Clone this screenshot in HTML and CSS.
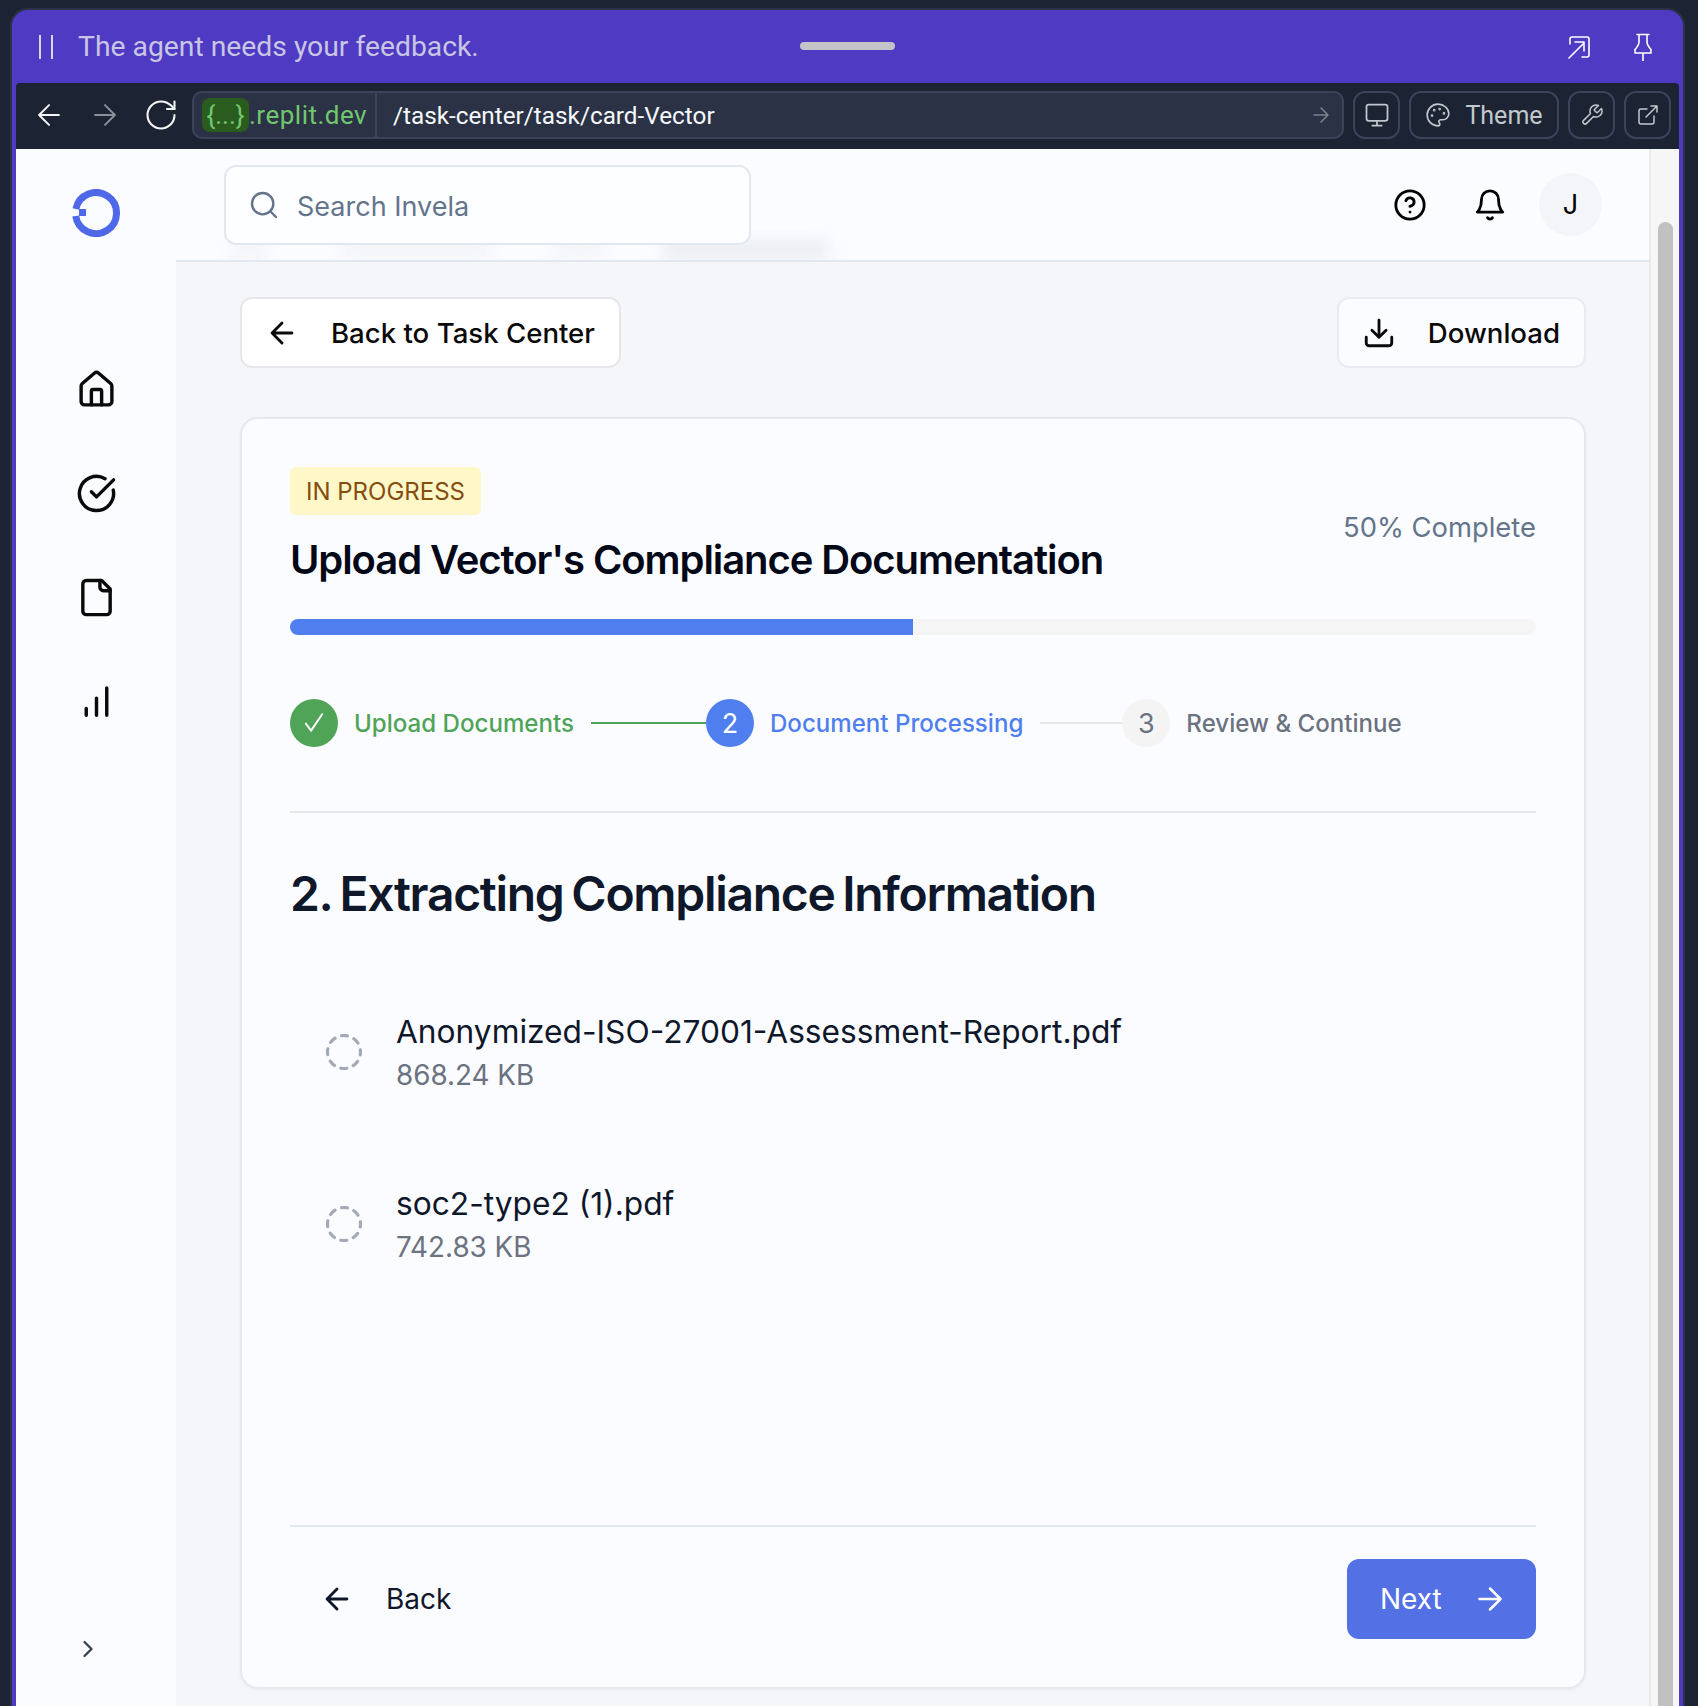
FILE: index.html
```html
<!DOCTYPE html>
<html lang="en">

<head>
    <meta charset="UTF-8">
    <meta name="viewport" content="width=device-width, initial-scale=1.0">
    <title>Invela - Task Center</title>
    <link rel="stylesheet" href="styles.css">
</head>

<body>
    <div class="window">
        <div class="agentbar">
            <svg class="pause" width="14" height="24" viewBox="0 0 14 24"><path d="M1 0v24M13 0v24" /></svg>
            <span class="agentbar-text">The agent needs your feedback.</span>
            <span class="handle"></span>
            <div class="agentbar-icons">
                <svg width="24" height="24" viewBox="0 0 24 24"><path d="M3 9V4a2 2 0 0 1 2-2h15a2 2 0 0 1 2 2v16a2 2 0 0 1-2 2h-5M2 23 17 8M8 7h9v9" /></svg>
                <svg width="18" height="28" viewBox="0 0 18 28"><path d="M3 1.5h12M5 1.5V9q0 3-4 7.5V20h16v-3.500Q13 12 13 9V1.500M9 20v8" /></svg>
            </div>
        </div>

        <div class="browser">
            <div class="toolbar">
                <svg class="nav-icon" width="34" height="34" viewBox="0 0 24 24"><path d="M19 12H5M12 19l-7-7 7-7" /></svg>
                <svg class="nav-icon dim" width="34" height="34" viewBox="0 0 24 24"><path d="M5 12h14M12 5l7 7-7 7" /></svg>
                <svg class="nav-icon reload" width="36" height="36" viewBox="0 0 24 24"><path d="M21 12a9 9 0 1 1-9-9c2.520 0 4.930 1 6.740 2.740L21 8" /><path d="M21 3v5h-5" /></svg>
                <div class="urlbar">
                    <div class="url-host"><span class="url-pill">{...}</span>.replit.dev</div>
                    <div class="url-path">/task-center/task/card-Vector</div>
                    <svg class="url-go" width="24" height="24" viewBox="0 0 24 24"><path d="M5 12h14M12 5l7 7-7 7" /></svg>
                </div>
                <button class="tool-btn square">
                    <svg width="28" height="28" viewBox="0 0 24 24"><rect x="3" y="3" width="18" height="14" rx="2" /><path d="M12 17v4M8 21h8" /></svg>
                </button>
                <button class="tool-btn theme">
                    <svg width="26" height="26" viewBox="0 0 24 24"><path d="M12 2C6.500 2 2 6.500 2 12s4.500 10 10 10c.926 0 1.648-.746 1.648-1.688 0-.437-.18-.835-.437-1.125-.29-.289-.438-.652-.438-1.125a1.640 1.640 0 0 1 1.668-1.668h1.996c3.051 0 5.555-2.503 5.555-5.554C21.965 6.012 17.461 2 12 2z" /><circle cx="13.500" cy="6.500" r=".5" /><circle cx="17.500" cy="10.500" r=".5" /><circle cx="8.500" cy="7.500" r=".5" /><circle cx="6.500" cy="12.500" r=".5" /></svg>
                    Theme
                </button>
                <button class="tool-btn square">
                    <svg width="24" height="24" viewBox="0 0 24 24"><path d="M14.700 6.300a1 1 0 0 0 0 1.400l1.600 1.600a1 1 0 0 0 1.400 0l3.770-3.770a6 6 0 0 1-7.940 7.940l-6.910 6.910a2.120 2.120 0 0 1-3-3l6.910-6.910a6 6 0 0 1 7.940-7.940l-3.760 3.760z" /></svg>
                </button>
                <button class="tool-btn square">
                    <svg width="24" height="24" viewBox="0 0 24 24"><path d="M18 13v6a2 2 0 0 1-2 2H5a2 2 0 0 1-2-2V8a2 2 0 0 1 2-2h6M15 3h6v6M10 14 21 3" /></svg>
                </button>
            </div>

            <div class="content">
                <aside class="sidebar">
                    <svg class="logo" width="48" height="48" viewBox="0 0 48 48">
                        <path d="M3.900 20A20.500 20.500 0 1 1 3.720 27" />
                        <rect x="7" y="20" width="7" height="7" />
                    </svg>
                    <nav class="side-nav">
                        <a class="side-link"><svg width="41" height="41" viewBox="0 0 24 24"><path d="M15 21v-8a1 1 0 0 0-1-1h-4a1 1 0 0 0-1 1v8" /><path d="M3 10a2 2 0 0 1 .709-1.528l7-5.999a2 2 0 0 1 2.582 0l7 5.999A2 2 0 0 1 21 10v9a2 2 0 0 1-2 2H5a2 2 0 0 1-2-2z" /></svg></a>
                        <a class="side-link"><svg width="41" height="41" viewBox="0 0 24 24"><path d="M21.801 10A10 10 0 1 1 17 3.335" /><path d="m9 11 3 3L22 4" /></svg></a>
                        <a class="side-link"><svg width="41" height="41" viewBox="0 0 24 24"><path d="M15 2H6a2 2 0 0 0-2 2v16a2 2 0 0 0 2 2h12a2 2 0 0 0 2-2V7Z" /><path d="M14 2v4a2 2 0 0 0 2 2h4" /></svg></a>
                        <a class="side-link"><svg width="41" height="41" viewBox="0 0 24 24"><path d="M12 20V10M18 20V4M6 20v-4" /></svg></a>
                    </nav>
                    <svg class="side-toggle" width="28" height="28" viewBox="0 0 24 24"><path d="m9 18 6-6-6-6" /></svg>
                </aside>

                <main class="main">
                    <header class="topbar">
                        <div class="ghost-row">
                            <span class="ghost g1"></span>
                            <span class="ghost g2"></span>
                            <span class="ghost g3"></span>
                            <span class="ghost g4"></span>
                        </div>
                        <div class="search">
                            <svg width="32" height="32" viewBox="0 0 24 24"><circle cx="11" cy="11" r="8" /><path d="m21 21-4.300-4.300" /></svg>
                            <span class="search-text">Search Invela</span>
                        </div>
                        <div class="top-actions">
                            <svg width="34" height="34" viewBox="0 0 24 24"><circle cx="12" cy="12" r="10" /><path d="M9.090 9a3 3 0 0 1 5.830 1c0 2-3 3-3 3M12 17h.01" /></svg>
                            <svg width="34" height="34" viewBox="0 0 24 24"><path d="M6 8a6 6 0 0 1 12 0c0 7 3 9 3 9H3s3-2 3-9" /><path d="M10.300 21a1.940 1.940 0 0 0 3.400 0" /></svg>
                            <div class="avatar">J</div>
                        </div>
                    </header>

                    <div class="page">
                        <div class="page-actions">
                            <button class="btn">
                                <svg width="34" height="34" viewBox="0 0 24 24"><path d="M19 12H5M12 19l-7-7 7-7" /></svg>
                                Back to Task Center
                            </button>
                            <button class="btn">
                                <svg width="34" height="34" viewBox="0 0 24 24"><path d="M21 15v4a2 2 0 0 1-2 2H5a2 2 0 0 1-2-2v-4M7 10l5 5 5-5M12 15V3" /></svg>
                                Download
                            </button>
                        </div>

                        <section class="card">
                            <div class="card-head">
                                <div>
                                    <span class="badge">IN PROGRESS</span>
                                    <h1>Upload Vector's Compliance Documentation</h1>
                                </div>
                                <span class="percent">50% Complete</span>
                            </div>

                            <div class="progress"><div class="progress-fill" style="width: 50%"></div></div>

                            <div class="steps">
                                <div class="step done">
                                    <span class="step-dot"><svg width="28" height="28" viewBox="0 0 24 24"><path d="M5 12.500l4.500 6L19 4.500" /></svg></span>
                                    <span class="step-label">Upload Documents</span>
                                </div>
                                <span class="step-line l1"></span>
                                <div class="step active">
                                    <span class="step-dot">2</span>
                                    <span class="step-label">Document Processing</span>
                                </div>
                                <span class="step-line l2"></span>
                                <div class="step">
                                    <span class="step-dot">3</span>
                                    <span class="step-label">Review &amp; Continue</span>
                                </div>
                            </div>

                            <h2>2. Extracting Compliance Information</h2>

                            <div class="files">
                                <div class="file">
                                    <svg class="spinner" width="36" height="36" viewBox="0 0 36 36"><circle cx="18" cy="18" r="16.500" /></svg>
                                    <div>
                                        <div class="file-name">Anonymized-ISO-27001-Assessment-Report.pdf</div>
                                        <div class="file-size">868.24 KB</div>
                                    </div>
                                </div>
                                <div class="file">
                                    <svg class="spinner" width="36" height="36" viewBox="0 0 36 36"><circle cx="18" cy="18" r="16.500" /></svg>
                                    <div>
                                        <div class="file-name">soc2-type2 (1).pdf</div>
                                        <div class="file-size">742.83 KB</div>
                                    </div>
                                </div>
                            </div>

                            <div class="card-foot">
                                <button class="foot-back">
                                    <svg width="34" height="34" viewBox="0 0 24 24"><path d="M19 12H5M12 19l-7-7 7-7" /></svg>
                                    Back
                                </button>
                                <button class="foot-next">
                                    Next
                                    <svg width="36" height="36" viewBox="0 0 24 24"><path d="M5 12h14M12 5l7 7-7 7" /></svg>
                                </button>
                            </div>
                        </section>
                    </div>
                </main>

                <div class="scrollbar"><div class="scroll-thumb"></div></div>
            </div>
        </div>
    </div>
</body>

</html>
```

FILE: styles.css
```css
* {
    box-sizing: border-box;
}

html,
body {
    margin: 0;
    height: 100%;
    overflow: hidden;
}

body {
    background-color: #1c2333;
    font-family: Inter, "Liberation Sans", sans-serif;
    color: #0f172a;
}

svg {
    fill: none;
    stroke: currentColor;
    stroke-width: 2;
    stroke-linecap: round;
    stroke-linejoin: round;
    flex-shrink: 0;
}

button {
    font-family: inherit;
    cursor: pointer;
}

/* outer replit window */
.window {
    margin: 10px 15px 0 12px;
    height: 1696px;
    padding: 0 4px;
    display: flex;
    flex-direction: column;
    background-color: #4e3ac3;
    border-radius: 16px 16px 0 0;
    box-shadow: 0 0 0 2px #2b3245;
}

.agentbar {
    height: 73px;
    display: flex;
    align-items: center;
    position: relative;
    flex-shrink: 0;
}

.pause {
    margin: 0 0 0 23px;
    color: #d8d6ea;
    stroke-width: 2;
}

.agentbar-text {
    margin-left: 25px;
    font-family: Roboto, sans-serif;
    font-size: 28.300px;
    color: #c9c6e4;
}

.handle {
    position: absolute;
    left: 784px;
    top: 32px;
    width: 95px;
    height: 8px;
    border-radius: 4px;
    background-color: #c4c4c8;
}

.agentbar-icons {
    margin-left: auto;
    margin-right: 27px;
    display: flex;
    align-items: center;
    gap: 43px;
    color: #fff;
}

.agentbar-icons svg {
    stroke-width: 1.600;
}

.browser {
    flex: 1;
    min-height: 0;
    display: flex;
    flex-direction: column;
}

.toolbar {
    height: 66px;
    padding: 8px 8px 10px 0;
    display: flex;
    align-items: center;
    background-color: #1c2333;
    border-radius: 4px 4px 0 0;
    flex-shrink: 0;
}

.nav-icon {
    color: #f5f5f5;
    stroke-width: 1.400;
    margin-left: 16px;
}

.nav-icon.dim {
    color: #8b8f99;
    margin-left: 22px;
}

.nav-icon.reload {
    margin-left: 21px;
}

.nav-icon + .urlbar {
    margin-left: 13px;
}

.urlbar {
    flex: 1;
    height: 48px;
    display: flex;
    align-items: center;
    background-color: #2b3245;
    border: 2px solid #3c445c;
    border-radius: 10px;
    font-family: Roboto, sans-serif;
    font-size: 24.300px;
}

.url-host {
    height: 100%;
    width: 183px;
    padding-left: 8px;
    display: flex;
    align-items: center;
    border-right: 2px solid #3c445c;
    color: #71c76f;
    font-size: 26px;
    letter-spacing: 0.5px;
}

.url-pill {
    height: 34px;
    width: 47px;
    display: flex;
    align-items: center;
    justify-content: center;
    border-radius: 8px;
    background-color: #2a5c1f;
    letter-spacing: 0;
}

.url-path {
    margin-left: 16px;
    color: #f5f9fc;
}

.url-go {
    margin-left: auto;
    margin-right: 9px;
    color: #7d828e;
    stroke-width: 1.500;
}

.tool-btn {
    height: 48px;
    margin-left: 9px;
    display: flex;
    align-items: center;
    justify-content: center;
    background-color: #1c2333;
    border: 2px solid #3c445c;
    border-radius: 12px;
    color: #c2c8cc;
    font-family: Roboto, sans-serif;
    font-size: 25px;
    padding: 0;
}

.tool-btn svg {
    stroke-width: 1.500;
}

.square {
    width: 47px;
}

.theme {
    width: 150px;
    gap: 14px;
}

.content {
    flex: 1;
    min-height: 0;
    display: flex;
    background-color: #fbfcff;
}

/* left nav */
.sidebar {
    width: 160px;
    flex-shrink: 0;
    padding-top: 40px;
    display: flex;
    flex-direction: column;
    align-items: center;
    background-color: #fbfcff;
}

.logo {
    stroke: #4f68e8;
    stroke-width: 7;
    stroke-linecap: butt;
}

.logo rect {
    fill: #4f68e8;
    stroke: none;
}

.side-nav {
    margin-top: 100px;
    display: flex;
    flex-direction: column;
}

.side-link {
    height: 104px;
    display: flex;
    align-items: center;
    justify-content: center;
    color: #0a0a0a;
}

.side-toggle {
    margin-top: auto;
    margin-bottom: 43px;
    margin-right: 16px;
    color: #374151;
}

.main {
    flex: 1;
    min-width: 0;
    display: flex;
    flex-direction: column;
    background-color: #f5f6fa;
    border-right: 2px solid #e8eaee;
}

.topbar {
    height: 113px;
    flex-shrink: 0;
    padding: 16px 47px 0 48px;
    display: flex;
    justify-content: space-between;
    align-items: flex-start;
    background-color: #fbfcff;
    border-bottom: 2px solid #e2e8f0;
    position: relative;
    overflow: hidden;
}

/* page text showing through the blurred header */
.ghost-row {
    position: absolute;
    left: 0;
    bottom: 1px;
    width: 100%;
    height: 18px;
}

.ghost {
    position: absolute;
    top: 1px;
    height: 16px;
    background-color: #f2f3f6;
    filter: blur(8px);
}

.g1 {
    left: 57px;
    width: 32px;
}

.g2 {
    left: 166px;
    width: 148px;
}

.g3 {
    left: 379px;
    width: 49px;
}

.g4 {
    left: 488px;
    width: 164px;
    background-color: #e8eaee;
}

.search {
    width: 527px;
    height: 80px;
    padding-left: 22px;
    display: flex;
    align-items: center;
    gap: 17px;
    background-color: #fdfeff;
    border: 2px solid #e2e8f0;
    border-radius: 12px;
    color: #64748b;
    font-size: 27px;
    position: relative;
}

.search svg {
    stroke-width: 1.800;
}

.search-text {
    margin-top: 3px;
}

.top-actions {
    margin-top: 8px;
    display: flex;
    align-items: center;
    color: #000;
    position: relative;
}

.top-actions svg:first-child {
    margin-right: 46px;
}

.avatar {
    width: 63px;
    height: 63px;
    margin-left: 32px;
    display: flex;
    align-items: center;
    justify-content: center;
    border-radius: 50%;
    background-color: #f3f5f8;
    font-size: 27px;
}

.page {
    flex: 1;
    min-height: 0;
    padding: 35px 63px 0 64px;
}

.page-actions {
    display: flex;
    justify-content: space-between;
}

.btn {
    height: 71px;
    padding: 0 24px 0 23px;
    display: flex;
    align-items: center;
    gap: 32px;
    background-color: #fff;
    border: 2px solid #e5e7eb;
    border-radius: 12px;
    color: #0a0a0a;
    font-size: 27.600px;
    font-weight: 500;
}

.btn + .btn {
    background-color: #fbfcff;
    border-color: #e8ecf2;
}

.card {
    margin-top: 49px;
    height: 1272px;
    padding: 48px;
    display: flex;
    flex-direction: column;
    background-color: #fbfcff;
    border: 2px solid #e5e9ef;
    border-radius: 18px;
    box-shadow: 0 1px 3px rgba(0, 0, 0, 0.05);
}

.card-head {
    display: flex;
    justify-content: space-between;
    align-items: center;
}

.badge {
    display: inline-block;
    height: 48px;
    padding: 1px 16px 0;
    line-height: 48px;
    border-radius: 6px;
    background-color: #fef8c8;
    color: #854d0e;
    font-size: 24px;
}

h1 {
    margin: 19px 0 0;
    font-size: 40px;
    line-height: 52px;
    font-weight: 600;
    letter-spacing: -1.080px;
    color: #020817;
}

.percent {
    font-size: 27.400px;
    color: #64748b;
}

.progress {
    margin-top: 33px;
    height: 16px;
    border-radius: 8px;
    background-color: #f5f5f5;
    overflow: hidden;
    flex-shrink: 0;
}

.progress-fill {
    height: 100%;
    background-color: #4f7fee;
}

.steps {
    margin-top: 64px;
    padding-bottom: 64px;
    display: flex;
    align-items: center;
    border-bottom: 2px solid #e5e7eb;
}

.step {
    display: flex;
    align-items: center;
    gap: 16px;
    color: #6b7280;
    font-size: 24.100px;
    font-weight: 500;
}

.step-dot {
    width: 48px;
    height: 48px;
    display: flex;
    align-items: center;
    justify-content: center;
    border-radius: 50%;
    background-color: #f4f4f5;
    font-size: 27px;
    font-weight: 400;
}

.step-dot svg {
    stroke-width: 1.700;
}

.step.done {
    color: #4fa458;
}

.step.done .step-dot {
    background-color: #4fa458;
    color: #fff;
}

.step.active {
    color: #4f7fee;
}

.step.active .step-dot {
    background-color: #4f7fee;
    color: #fff;
}

.step-line {
    height: 2px;
    margin-left: 17px;
    background-color: #e5e7eb;
}

.l1 {
    width: 115px;
    background-color: #4fa458;
}

.l2 {
    width: 82px;
}

h2 {
    margin: 51px 0 0;
    font-size: 48px;
    line-height: 60px;
    font-weight: 600;
    letter-spacing: -1.300px;
    word-spacing: -3px;
}

.files {
    margin-top: 86px;
    padding-left: 36px;
    display: flex;
    flex-direction: column;
    gap: 86px;
}

.file {
    display: flex;
    align-items: center;
    gap: 34px;
}

.spinner {
    margin-top: -3px;
    stroke: #a3a9b5;
    stroke-width: 3.200;
    stroke-dasharray: 6 6.960;
    stroke-dashoffset: 3;
}

.file-name {
    font-size: 31.700px;
    line-height: 44px;
    color: #0f172a;
}

.file-size {
    font-size: 27.800px;
    line-height: 42px;
    color: #6b7280;
}

.card-foot {
    margin-top: auto;
    padding-top: 32px;
    display: flex;
    justify-content: space-between;
    align-items: center;
    border-top: 2px solid #e2e8f0;
}

.foot-back {
    padding: 0 0 0 30px;
    display: flex;
    align-items: center;
    gap: 32px;
    background: none;
    border: none;
    color: #0f172a;
    font-size: 28px;
}

.foot-next {
    width: 189px;
    height: 80px;
    padding: 0 0 0 33px;
    display: flex;
    align-items: center;
    gap: 30px;
    background-color: #5470e5;
    border: none;
    border-radius: 12px;
    color: #fff;
    font-size: 28px;
}

.foot-next svg {
    stroke-width: 1.700;
}

/* browser scrollbar */
.scrollbar {
    width: 28px;
    flex-shrink: 0;
    padding: 73px 6px 0 7px;
    background-color: #f6f6f6;
}

.scroll-thumb {
    height: 100%;
    border-radius: 8px 8px 0 0;
    background-color: #c1c1c1;
}
```
